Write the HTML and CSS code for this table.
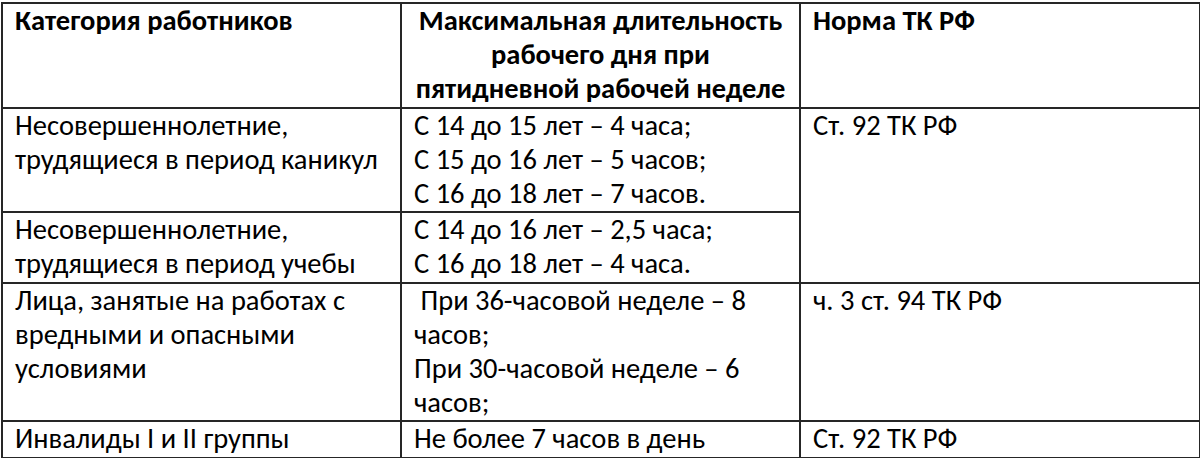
FILE: index.html
```html
<!DOCTYPE html>
<html lang="ru">
<head>
<meta charset="utf-8">
<link rel="stylesheet" href="styles.css">
</head>
<body>
<table class="norms">
  <colgroup>
    <col class="c1"><col class="c2"><col class="c3">
  </colgroup>
  <thead>
    <tr>
      <th class="left">Категория работников</th>
      <th class="center">Максимальная длительность рабочего дня при пятидневной рабочей неделе</th>
      <th class="left">Норма ТК РФ</th>
    </tr>
  </thead>
  <tbody>
    <tr>
      <td>Несовершеннолетние, трудящиеся в период каникул</td>
      <td>С 14 до 15 лет – 4 часа;<br>С 15 до 16 лет – 5 часов;<br>С 16 до 18 лет – 7 часов.</td>
      <td rowspan="2">Ст. 92 ТК РФ</td>
    </tr>
    <tr>
      <td>Несовершеннолетние, трудящиеся в период учебы</td>
      <td>С 14 до 16 лет – 2,5 часа;<br>С 16 до 18 лет – 4 часа.</td>
    </tr>
    <tr>
      <td>Лица, занятые на работах с вредными и опасными условиями</td>
      <td>&nbsp;При 36-часовой неделе – 8 часов;<br>При 30-часовой неделе – 6 часов;</td>
      <td>ч. 3 ст. 94 ТК РФ</td>
    </tr>
    <tr>
      <td>Инвалиды I и II группы</td>
      <td>Не более 7 часов в день</td>
      <td>Ст. 92 ТК РФ</td>
    </tr>
  </tbody>
</table>
</body>
</html>
```
FILE: styles.css
```css
html, body {
  margin: 0;
  padding: 0;
  background: #fff;
}

body {
  font-family: Carlito, "Open Sans", "Liberation Sans", sans-serif;
  font-size: 28.5px;
  color: #000;
}

.norms {
  margin: 2px 0 0 1px;
  width: 1198px;
  table-layout: fixed;
  border-collapse: collapse;
}

.c1 { width: 399px; }
.c2 { width: 399px; }
.c3 { width: 400px; }

.norms th,
.norms td {
  border: 2px solid #262626;
  padding: 0 12px;
  vertical-align: top;
  line-height: 34.2px;
  font-size: 28.5px;
}

.norms th {
  font-weight: 700;
}

.norms th.left {
  text-align: left;
}

.norms th.center {
  text-align: center;
}

.norms td {
  font-weight: 400;
  text-align: left;
}
```
